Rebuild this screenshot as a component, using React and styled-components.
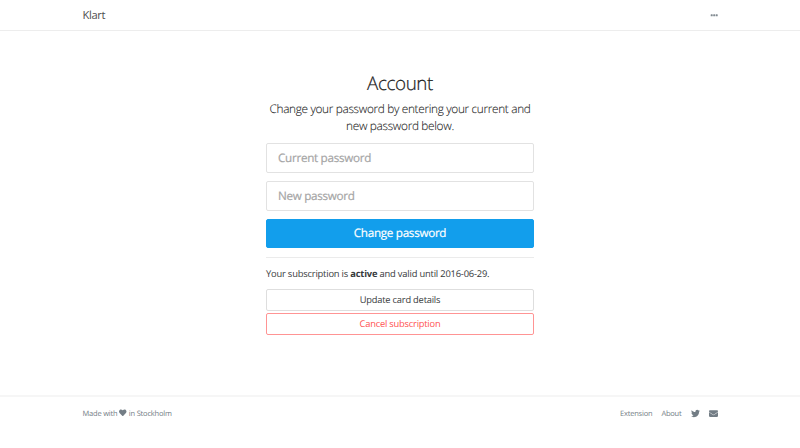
import React from "react";
import styled, { createGlobalStyle } from "styled-components";
import { FaEnvelope, FaHeart, FaTwitter } from "react-icons/fa";

const GlobalStyle = createGlobalStyle`
  * {
    box-sizing: border-box;
  }

  body {
    margin: 0;
    background: #fff;
    color: #373a3c;
    font-family: "Open Sans", "Noto Sans", sans-serif;
    font-size: 9px;
    text-rendering: geometricPrecision;
    -webkit-font-smoothing: antialiased;
  }

  button,
  input {
    text-rendering: inherit;
  }
`;

const Page = styled.div`
  display: flex;
  flex-direction: column;
  height: 448px;
  overflow: hidden;
`;

const Container = styled.div`
  display: flex;
  align-items: center;
  justify-content: space-between;
  width: 635px;
  height: 100%;
  margin: 0 auto;
`;

const Header = styled.header`
  flex: none;
  height: 31px;
  border-bottom: 1px solid #ededed;
`;

const Brand = styled.a`
  padding-top: 2px;
  color: #505050;
  font-size: 11.2px;
  line-height: 16px;
  letter-spacing: -0.35px;
`;

const MenuButton = styled.button`
  display: flex;
  padding: 0;
  border: 0;
  background: none;
  color: #818a91;
`;

const Main = styled.main`
  flex: 1;
  width: 268px;
  margin: 0 auto;
  padding-top: 39px;
`;

const Title = styled.h1`
  margin: 0;
  color: #222;
  font-size: 18.8px;
  font-weight: 300;
  line-height: 26px;
  letter-spacing: -0.4px;
  text-align: center;
  -webkit-text-stroke: 0.2px;
`;

const Lead = styled.p`
  margin: 5px -2px 8px;
  color: #222;
  font-size: 11.8px;
  font-weight: 300;
  line-height: 17px;
  letter-spacing: -0.32px;
  text-align: center;
  -webkit-text-stroke: 0.1px;
`;

const Input = styled.input`
  display: block;
  width: 100%;
  height: 30px;
  margin-bottom: 8px;
  padding: 0 11px 1px;
  border: 1px solid #e2e2e2;
  border-radius: 2px;
  font-family: inherit;
  font-size: 11.7px;
  letter-spacing: -0.3px;
  -webkit-text-stroke: 0.2px;

  &::placeholder {
    color: #a5a5a5;
  }
`;

const Button = styled.button`
  display: flex;
  align-items: center;
  justify-content: center;
  width: 100%;
  height: 22px;
  margin-bottom: 2px;
  padding: 0 0 1px;
  border: 1px solid ${({ $danger }) => ($danger ? "#ff9494" : "#dedede")};
  border-radius: 2px;
  background: #fff;
  color: ${({ $danger }) => ($danger ? "#ff4f4f" : "#373a3c")};
  font-family: inherit;
  font-size: 9.3px;
  letter-spacing: -0.2px;
`;

const SubmitButton = styled(Button)`
  height: 29px;
  margin: 0;
  border-color: #129eec;
  background: #129eec;
  color: #fff;
  font-size: 11.7px;
  letter-spacing: -0.3px;
  -webkit-text-stroke: 0.2px;
`;

const Divider = styled.hr`
  margin: 9px 0;
  border: 0;
  border-top: 1px solid #ebebeb;
`;

const Status = styled.p`
  margin: 0 0 8px;
  font-size: 9.35px;
  line-height: 14px;
  letter-spacing: -0.19px;
  white-space: nowrap;
`;

const Footer = styled.footer`
  flex: none;
  height: 53px;
  border-top: 2px solid #f6f6f6;
  color: #737d85;
  font-size: 7.5px;
  letter-spacing: -0.2px;

  ${Container} {
    height: 32px;
  }
`;

const MadeWith = styled.span`
  display: flex;
  align-items: center;
  gap: 2px;
  padding-top: 1px;
  line-height: 12px;

  svg {
    display: block;
    margin-top: -1px;
  }
`;

const FooterNav = styled.nav`
  display: flex;
  align-items: center;
  gap: 9px;

  a {
    padding-top: 1px;
    line-height: 12px;
  }

  svg {
    display: block;
    font-size: 9px;
  }
`;

const EllipsisIcon = () => (
  <svg width="8" height="3" viewBox="0 0 8 3" fill="currentColor">
    <rect x="0.7" y="0.3" width="2" height="2" rx="0.4" />
    <rect x="3.2" y="0.3" width="2" height="2" rx="0.4" />
    <rect x="5.7" y="0.3" width="2" height="2" rx="0.4" />
  </svg>
);

const App = () => {
  return (
    <>
      <GlobalStyle />
      <Page>
        <Header>
          <Container>
            <Brand>Klart</Brand>
            <MenuButton aria-label="Menu">
              <EllipsisIcon />
            </MenuButton>
          </Container>
        </Header>
        <Main>
          <Title>Account</Title>
          <Lead>
            Change your password by entering your current and new password
            below.
          </Lead>
          <Input type="password" placeholder="Current password" />
          <Input type="password" placeholder="New password" />
          <SubmitButton>Change password</SubmitButton>
          <Divider />
          <Status>
            Your subscription is <strong>active</strong> and valid until
            2016-06-29.
          </Status>
          <Button>Update card details</Button>
          <Button $danger>Cancel subscription</Button>
        </Main>
        <Footer>
          <Container>
            <MadeWith>
              Made with <FaHeart /> in Stockholm
            </MadeWith>
            <FooterNav>
              <a>Extension</a>
              <a>About</a>
              <FaTwitter />
              <FaEnvelope />
            </FooterNav>
          </Container>
        </Footer>
      </Page>
    </>
  );
};

export default App;
